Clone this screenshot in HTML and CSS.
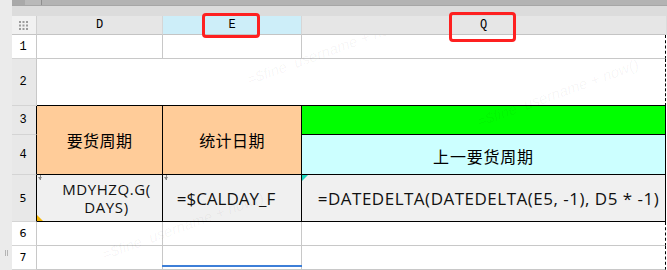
FILE: index.html
```html
<!DOCTYPE html>
<html lang="zh">
<head>
<meta charset="utf-8">
<title>Sheet</title>
<link rel="stylesheet" href="styles.css">
</head>
<body>
<div class="app">
  <div class="edge"><span class="grip"></span></div>
  <div class="main">
    <div class="topbar"><span class="tb-a"></span><span class="tb-b"></span></div>
    <div class="band"></div>
    <div class="sheet">
      <div class="corner">
        <svg width="9" height="9" viewBox="0 0 9 9"><g fill="#9c9c9c"><rect x="0" y="0" width="2" height="2"/><rect x="3.5" y="0" width="2" height="2"/><rect x="7" y="0" width="2" height="2"/><rect x="0" y="3.5" width="2" height="2"/><rect x="3.5" y="3.5" width="2" height="2"/><rect x="7" y="3.5" width="2" height="2"/><rect x="0" y="7" width="2" height="2"/><rect x="3.5" y="7" width="2" height="2"/><rect x="7" y="7" width="2" height="2"/></g></svg>
      </div>
      <div class="hc">D</div>
      <div class="hc hc-sel">E</div>
      <div class="hc hc-last">Q</div>
      <div class="hf"></div>

      <div class="rh">1</div>
      <div class="c"></div>
      <div class="c"></div>
      <div class="c q"></div>
      <div class="f"></div>

      <div class="rh rh-on">2</div>
      <div class="c span3 bb"></div>
      <div class="f"></div>

      <div class="rh rh-on rh-dark">3</div>
      <div class="c tall orange bb br cn">要货周期</div>
      <div class="c tall orange bb br cn">统计日期</div>
      <div class="c green bb bq"></div>
      <div class="f"></div>

      <div class="rh rh-on rh-dark">4</div>
      <div class="c cyan bb bq cn">上一要货周期</div>
      <div class="f"></div>

      <div class="rh rh-on rh-dark rh-sans">5</div>
      <div class="c grey bb br fx fx-d"><span class="mk-arrow"></span><span class="fx-lines">MDYHZQ.G(<br>DAYS)</span><span class="mk-orange"></span></div>
      <div class="c grey bb br fx fx-e"><span class="mk-arrow"></span>=$CALDAY_F</div>
      <div class="c grey bb bq fx fx-q"><span class="mk-teal"></span>=DATEDELTA(DATEDELTA(E5, -1), D5 * -1)</div>
      <div class="f"></div>

      <div class="rh rh-sans">6</div>
      <div class="c"></div>
      <div class="c"></div>
      <div class="c q"></div>
      <div class="f"></div>

      <div class="rh rh-sans">7</div>
      <div class="c"></div>
      <div class="c sel-bottom"></div>
      <div class="c q"></div>
      <div class="f"></div>

      <div class="wmlayer">
        <span class="wm wm-a">=$fine_username + now()</span>
        <span class="wm wm-b">=$fine_username + now()</span>
        <span class="wm wm-c">=$fine_username + now()</span>
      </div>
    </div>
  </div>
  <span class="mark mark-e"></span>
  <span class="mark mark-q"></span>
</div>
</body>
</html>
```
FILE: styles.css
```css
* { box-sizing: border-box; }
html, body { margin: 0; padding: 0; }
body {
  width: 667px;
  height: 270px;
  overflow: hidden;
  background: #fff;
  font-family: "Liberation Sans", sans-serif;
}
.app {
  position: relative;
  display: flex;
  height: 270px;
}
.edge {
  width: 12px;
  flex: none;
  background: #ebebeb;
  display: flex;
  flex-direction: column;
  justify-content: flex-end;
  align-items: flex-start;
  padding: 0 0 14px 5px;
}
.grip {
  width: 3px;
  height: 6px;
  border-left: 1px solid #b4b4b4;
  border-right: 1px solid #b4b4b4;
}
.main {
  flex: 1;
  min-width: 0;
  display: flex;
  flex-direction: column;
}
.topbar {
  height: 6px;
  display: flex;
  background: #b3b3b3;
  border-bottom: 1px solid #a6a6a6;
}
.tb-a { width: 13px; background: #a9a9a9; }
.tb-b { width: 17px; background: #b9b9b9; border-right: 1px solid #8e8e8e; }
.band { height: 11px; background: #dcdcdc; }

.sheet {
  position: relative;
  display: grid;
  grid-template-columns: 25px 126px 139px 364px 1px;
  grid-template-rows: 19px 24px 47px 29px 40px 47px 24px 24px;
}

.corner {
  background: #f1f1f1;
  border-right: 1px solid #d0d0d0;
  border-bottom: 1px solid #c4c4c4;
  display: flex;
  align-items: center;
  justify-content: center;
  padding-right: 1px;
}
.corner svg { display: block; }
.hc {
  background: #e6e6e6;
  border-right: 1px solid #d6d6d6;
  border-bottom: 1px solid #c4c4c4;
  display: flex;
  align-items: center;
  justify-content: center;
  font-family: "Liberation Mono", monospace;
  font-size: 12px;
  color: #000;
}
.hc-sel { background: #cdeef9; }
.hc-last { border-right: 1px solid #e6e6e6; }
.hf { background: #dcdcdc; }

.rh {
  background: #fff;
  border-right: 1px solid #c8c8c8;
  border-bottom: 1px solid #d4d4d4;
  display: flex;
  align-items: center;
  justify-content: center;
  padding-right: 2px;
  font-family: "Liberation Mono", monospace;
  font-size: 12px;
  color: #000;
}
.rh-on { background: #e8e8e8; }
.rh-dark { border-right-color: #000; }
.rh-sans { font-family: "DejaVu Sans", sans-serif; font-size: 11px; }

.c {
  position: relative;
  background: #fff;
  border-right: 1px solid #c8c8c8;
  border-bottom: 1px solid #c8c8c8;
  display: flex;
  align-items: center;
  justify-content: center;
  text-align: center;
  color: #000;
}
.q { border-right: 1px dashed #000; }
.f { background: #fff; }
.span3 { grid-column: span 3; border-right: 1px dashed #000; }
.tall { grid-row: span 2; }
.bb { border-bottom-color: #000; }
.br { border-right-color: #000; }
.bq { border-right: 1px solid #000; }

.orange { background: #ffcc99; }
.green { background: #00ff00; }
.cyan { background: #ccffff; }
.grey { background: #f0f0f0; }

.cn {
  font-family: "Noto Sans CJK SC", sans-serif;
  font-size: 16px;
  letter-spacing: 0.4px;
}
.cyan.cn { letter-spacing: 0.8px; padding-top: 2px; }

.fx {
  font-family: "Open Sans", sans-serif;
  font-size: 17px;
  color: #111;
}
.fx-d { font-size: 15px; padding-left: 14px; }
.fx-lines { display: block; line-height: 18px; letter-spacing: 0.6px; }
.fx-e { padding-right: 12px; padding-top: 1px; }
.fx-q { padding-left: 10px; padding-top: 1px; letter-spacing: 0.5px; }

.mk-arrow {
  position: absolute;
  left: 1px;
  top: 0;
  width: 5px;
  height: 5px;
  background:
    linear-gradient(#8a8a8a, #8a8a8a) 2px 0 / 1px 5px no-repeat;
}
.mk-arrow::after {
  content: "";
  position: absolute;
  left: 0;
  top: 2px;
  border-left: 2.5px solid transparent;
  border-right: 2.5px solid transparent;
  border-top: 3px solid #8a8a8a;
}
.mk-orange {
  position: absolute;
  left: 0;
  bottom: 0;
  width: 0;
  height: 0;
  border-bottom: 6px solid #f5b400;
  border-right: 6px solid transparent;
}
.mk-teal {
  position: absolute;
  left: 0;
  top: 0;
  width: 0;
  height: 0;
  border-top: 6px solid #1fd6be;
  border-right: 6px solid transparent;
}
.sel-bottom::after {
  content: "";
  position: absolute;
  left: -1px;
  right: -1px;
  bottom: 2px;
  height: 2px;
  background: #3d7fd8;
}

.wmlayer {
  position: absolute;
  left: 25px;
  top: 19px;
  right: 0;
  bottom: 0;
  overflow: hidden;
  pointer-events: none;
}
.wm {
  position: absolute;
  white-space: nowrap;
  font-family: "Liberation Sans", sans-serif;
  font-style: italic;
  font-size: 15px;
  line-height: 15px;
  color: rgba(0, 0, 0, 0.045);
  transform-origin: 0 100%;
  transform: rotate(-20deg);
}
.wm-a { left: 213px; top: 37px; }
.wm-b { left: 443px; top: 79px; }
.wm-c { left: 68px; top: 212px; }

.mark {
  position: absolute;
  border: 3px solid #fe2020;
  border-radius: 4px;
  pointer-events: none;
}
.mark-e { left: 202px; top: 13px; width: 58px; height: 25px; }
.mark-q { left: 449px; top: 12px; width: 67px; height: 30px; }
```
